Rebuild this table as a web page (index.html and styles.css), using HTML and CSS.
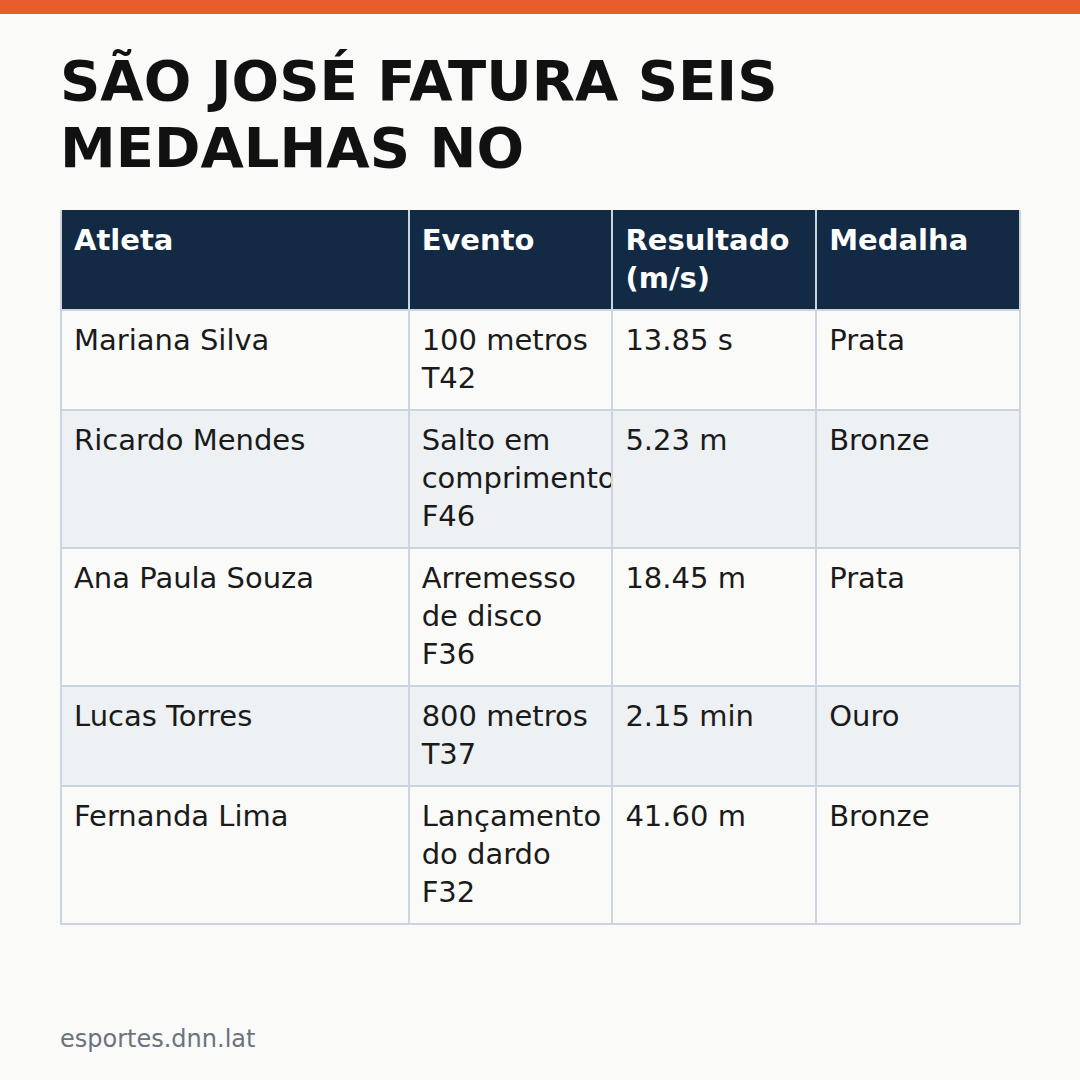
FILE: index.html
```html
<!DOCTYPE html>
<html lang="pt-BR">
<head>
<meta charset="utf-8">
<title>São José fatura seis medalhas</title>
<link rel="stylesheet" href="styles.css">
</head>
<body>
<div class="page">
  <div class="top-bar"></div>
  <main class="content">
    <h1 class="title">SÃO JOSÉ FATURA SEIS MEDALHAS NO</h1>
    <table class="results">
      <colgroup>
        <col class="col-athlete">
        <col class="col-event">
        <col class="col-result">
        <col class="col-medal">
      </colgroup>
      <thead>
        <tr>
          <th>Atleta</th>
          <th>Evento</th>
          <th>Resultado (m/s)</th>
          <th>Medalha</th>
        </tr>
      </thead>
      <tbody>
        <tr>
          <td>Mariana Silva</td>
          <td>100 metros T42</td>
          <td>13.85 s</td>
          <td>Prata</td>
        </tr>
        <tr>
          <td>Ricardo Mendes</td>
          <td>Salto em comprimento F46</td>
          <td>5.23 m</td>
          <td>Bronze</td>
        </tr>
        <tr>
          <td>Ana Paula Souza</td>
          <td>Arremesso de disco F36</td>
          <td>18.45 m</td>
          <td>Prata</td>
        </tr>
        <tr>
          <td>Lucas Torres</td>
          <td>800 metros T37</td>
          <td>2.15 min</td>
          <td>Ouro</td>
        </tr>
        <tr>
          <td>Fernanda Lima</td>
          <td>Lançamento do dardo F32</td>
          <td>41.60 m</td>
          <td>Bronze</td>
        </tr>
      </tbody>
    </table>
  </main>
  <footer class="footer">esportes.dnn.lat</footer>
</div>
</body>
</html>
```

FILE: styles.css
```css
html, body {
  margin: 0;
  padding: 0;
}

body {
  background: #fafaf8;
  font-family: "DejaVu Sans", "Liberation Sans", sans-serif;
  color: #1a1a1a;
}

.page {
  width: 1080px;
  height: 1080px;
  display: flex;
  flex-direction: column;
  overflow: hidden;
}

.top-bar {
  height: 14px;
  background: #e85d2e;
  flex: none;
}

.content {
  padding: 0 60px;
}

.title {
  margin: 33px 0 0;
  font-size: 56px;
  line-height: 1.2;
  font-weight: 700;
  color: #111111;
}

.results {
  margin-top: 29px;
  width: 961px;
  border-collapse: collapse;
  table-layout: fixed;
  font-size: 29px;
  line-height: 38px;
}

.col-athlete { width: 36.25%; }
.col-event,
.col-result,
.col-medal { width: 21.25%; }

.results th,
.results td {
  border: 2px solid #cbd5e1;
  padding: 10px 13px 12px 12px;
  text-align: left;
  vertical-align: top;
  overflow: hidden;
}

.results th {
  border-top: 0;
  padding-top: 11px;
  background: #132a45;
  color: #ffffff;
  font-weight: 700;
}

.results td {
  color: #1a1a1a;
  font-weight: 400;
}

.results tbody tr:nth-child(odd) td {
  background: #fafaf8;
}

.results tbody tr:nth-child(even) td {
  background: #edf1f4;
}

.footer {
  margin-top: auto;
  padding: 0 60px 27px;
  font-size: 24px;
  color: #6b7280;
}
```
